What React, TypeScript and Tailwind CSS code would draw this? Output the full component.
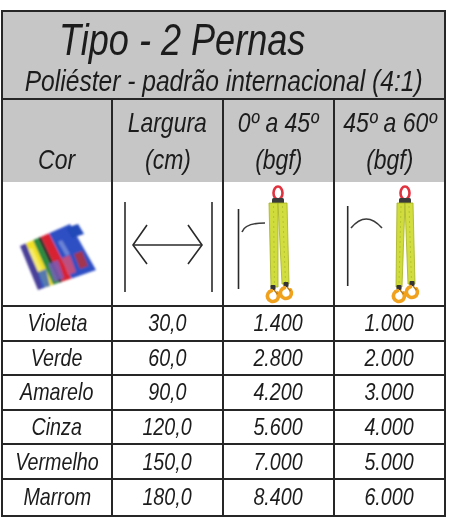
import React from 'react';

const rows = [
  { cor: 'Violeta', largura: '30,0', a: '1.400', b: '1.000' },
  { cor: 'Verde', largura: '60,0', a: '2.800', b: '2.000' },
  { cor: 'Amarelo', largura: '90,0', a: '4.200', b: '3.000' },
  { cor: 'Cinza', largura: '120,0', a: '5.600', b: '4.000' },
  { cor: 'Vermelho', largura: '150,0', a: '7.000', b: '5.000' },
  { cor: 'Marrom', largura: '180,0', a: '8.400', b: '6.000' },
];

// condensed look: Arial-width font squeezed horizontally
function N({ children, left }: { children: React.ReactNode; left?: boolean }) {
  return (
    <span className={`inline-block shrink-0 whitespace-nowrap scale-x-[0.82] ${left ? 'origin-left' : 'origin-center'}`}>
      {children}
    </span>
  );
}

function Bundle() {
  const stripes = [
    ['#4a3f9a', 0, 0.12],
    ['#f1e020', 0.12, 0.26],
    ['#2c8a3c', 0.26, 0.36],
    ['#2a2a2a', 0.36, 0.42],
    ['#d82232', 0.42, 0.58],
    ['#2d4fc4', 0.58, 1],
  ] as const;
  const A = [2, 26];
  const B = [52, 4];
  const D = [20, 70];
  const C = [78, 50];
  const lerp = (p: number[], q: number[], t: number) => [p[0] + (q[0] - p[0]) * t, p[1] + (q[1] - p[1]) * t];
  return (
    <svg width="108" height="123" viewBox="0 0 108 123">
      <defs>
        <filter id="blur">
          <feGaussianBlur stdDeviation="1.1" />
        </filter>
      </defs>
      <g transform="translate(15 38)" filter="url(#blur)">
        {stripes.map(([c, t0, t1]) => {
          const p1 = lerp(A, B, t0);
          const p2 = lerp(A, B, t1);
          const p3 = lerp(D, C, t1);
          const p4 = lerp(D, C, t0);
          return <polygon key={c} points={`${p1} ${p2} ${p3} ${p4}`} fill={c} />;
        })}
        <polygon points="30,44 40,40 46,58 36,62" fill="#7b5fc0" opacity="0.8" />
        <polygon points="44,38 52,35 58,52 50,55" fill="#e05070" opacity="0.8" />
        <polygon points="56,34 64,31 70,46 62,49" fill="#c03030" opacity="0.8" />
        <polygon points="20,52 28,49 32,66 24,68" fill="#3060d0" opacity="0.8" />
        <polygon points="48,8 60,4 66,14 54,18" fill="#2448b8" />
        <polygon points="10,30 14,28 24,50 20,52" fill="#ffffff" opacity="0.35" />
        <polygon points="40,22 44,20 52,34 48,36" fill="#ffffff" opacity="0.3" />
      </g>
    </svg>
  );
}

function WidthIcon() {
  return (
    <svg width="109" height="123" viewBox="0 0 109 123" fill="none" stroke="#2a2a2a" strokeWidth="1.6">
      <line x1="12" y1="20" x2="12" y2="110" />
      <line x1="99" y1="20" x2="99" y2="110" />
      <line x1="20" y1="63" x2="89" y2="63" />
      <polyline points="34,43 20,63 34,82" />
      <polyline points="75,43 89,63 75,82" />
    </svg>
  );
}

function Hook({ x, y }: { x: number; y: number }) {
  return (
    <g>
      <rect x={x - 2.5} y={y - 11} width="5" height="5" rx="1" fill="#333" />
      <path
        d={`M${x + 4.5} ${y - 3} A5.5 5.5 0 1 1 ${x - 1.5} ${y - 5.3}`}
        stroke="#f0a21e"
        strokeWidth="3.6"
        fill="none"
        strokeLinecap="round"
      />
      <line x1={x + 1} y1={y - 6} x2={x + 4.5} y2={y - 2} stroke="#b87a10" strokeWidth="1.4" />
    </g>
  );
}

function Sling({ cx, l, r }: { cx: number; l: [number, number, number, number]; r: [number, number, number, number] }) {
  return (
    <g>
      <ellipse cx={cx} cy="11" rx="4.5" ry="6.5" stroke="#e0323f" strokeWidth="2.6" fill="none" />
      <rect x={cx - 6} y="16" width="12" height="6" rx="1.5" fill="#3a3a3a" />
      <polygon points={`${l[0]},21 ${l[1]},21 ${l[3]},105 ${l[2]},105`} fill="#cfdc3c" stroke="#a4b022" strokeWidth="0.8" />
      <polygon points={`${r[0]},21 ${r[1]},21 ${r[3]},102 ${r[2]},102`} fill="#d2de40" stroke="#a4b022" strokeWidth="0.8" />
      <line x1={(l[0] + l[1]) / 2} y1="24" x2={(l[2] + l[3]) / 2} y2="103" stroke="#b4c42c" strokeWidth="1" strokeDasharray="2 3" />
      <line x1={(r[0] + r[1]) / 2} y1="24" x2={(r[2] + r[3]) / 2} y2="100" stroke="#b4c42c" strokeWidth="1" strokeDasharray="2 3" />
    </g>
  );
}

function AngleIcon45() {
  return (
    <svg width="109" height="123" viewBox="0 0 109 123" fill="none">
      <line x1="14.5" y1="27" x2="14.5" y2="107" stroke="#2a2a2a" strokeWidth="1.6" />
      <path d="M18 50 Q21 41 41 41" stroke="#3a3a3a" strokeWidth="1.6" />
      <Sling cx={54} l={[45, 54, 47, 54]} r={[54, 63, 58, 65]} />
      <Hook x={49} y={114} />
      <Hook x={62} y={111} />
    </svg>
  );
}

function AngleIcon60() {
  return (
    <svg width="109" height="123" viewBox="0 0 109 123" fill="none">
      <line x1="12.7" y1="24" x2="12.7" y2="104" stroke="#2a2a2a" strokeWidth="1.6" />
      <path d="M16 46 Q31 28 47 46" stroke="#3a3a3a" strokeWidth="1.6" />
      <Sling cx={70} l={[62, 70, 61, 67]} r={[70, 78, 73, 80]} />
      <Hook x={64} y={114} />
      <Hook x={77} y={110} />
    </svg>
  );
}

const font = "font-['Liberation_Sans',Arial,sans-serif] italic text-[#1c1c1c]";
const cols = 'grid grid-cols-[110px_111px_111px_109px]';
const line = 'border-r-2 border-[#262626]';

export default function App() {
  return (
    <div className={`w-[450px] h-[520px] bg-white pt-[10px] pl-[1px] ${font}`}>
      <div className="w-[445px] border-2 border-[#262626]">
        <div className="h-[88px] bg-[#c6c6c6] border-b-2 border-[#262626] flex flex-col overflow-hidden">
          <div className="pl-[56px] text-[44px] leading-[50px] pt-[3px]">
            <N left>Tipo - 2 Pernas</N>
          </div>
          <div className="flex justify-center text-[30px] leading-[31px]">
            <N>Poliéster - padrão internacional (4:1)</N>
          </div>
        </div>
        <div className={`${cols} h-[82px] bg-[#c6c6c6] text-[28px] leading-[37px]`}>
          <div className={`${line} flex flex-col justify-end items-center pb-[4px] overflow-hidden`}>
            <N>Cor</N>
          </div>
          <div className={`${line} flex flex-col justify-end items-center pb-[4px] overflow-hidden`}>
            <N>Largura</N>
            <N>(cm)</N>
          </div>
          <div className={`${line} flex flex-col justify-end items-center pb-[4px] overflow-hidden`}>
            <N>0º a 45º</N>
            <N>(bgf)</N>
          </div>
          <div className="flex flex-col justify-end items-center pb-[4px] overflow-hidden">
            <N>45º a 60º</N>
            <N>(bgf)</N>
          </div>
        </div>
        <div className={`${cols} h-[125px] border-b-2 border-[#262626]`}>
          <div className={line}><Bundle /></div>
          <div className={line}><WidthIcon /></div>
          <div className={line}><AngleIcon45 /></div>
          <div><AngleIcon60 /></div>
        </div>
        {rows.map((r, i) => (
          <div
            key={r.cor}
            className={`${cols} h-[34.6px] text-[24px] leading-none ${i < rows.length - 1 ? 'border-b-2 border-[#262626]' : ''}`}
          >
            <div className={`${line} flex items-center justify-center`}><N>{r.cor}</N></div>
            <div className={`${line} flex items-center justify-center`}><N>{r.largura}</N></div>
            <div className={`${line} flex items-center justify-center`}><N>{r.a}</N></div>
            <div className="flex items-center justify-center"><N>{r.b}</N></div>
          </div>
        ))}
      </div>
    </div>
  );
}
